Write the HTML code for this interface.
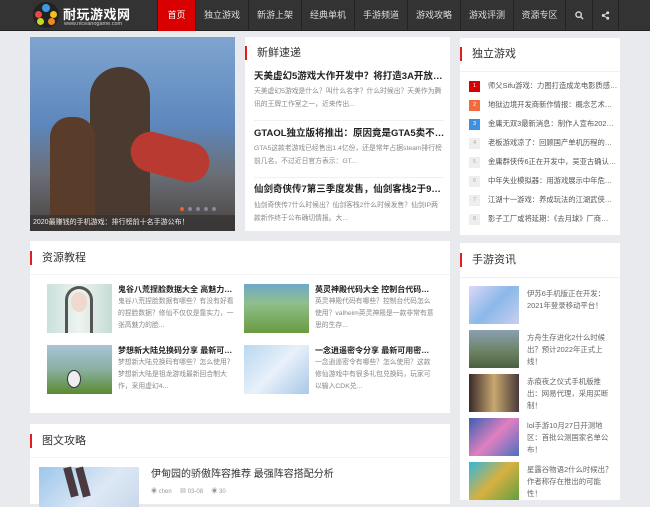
<!DOCTYPE html>
<html><head><meta charset="utf-8"><style>
*{margin:0;padding:0;box-sizing:border-box}
body{width:650px;height:500px;overflow:hidden;background:#e9eaed;font-family:"Liberation Sans","Noto Sans CJK SC",sans-serif;position:relative}
.a{position:absolute}
.hd{left:0;top:0;width:650px;height:31px;background:#333;border-bottom:1px solid #222}
.nav{top:0;height:31px;color:#ddd;font-size:9px;line-height:31px;text-align:center;border-left:1px solid #222}
.box{background:#fff}
.tt{font-size:11px;color:#333;padding-left:10px;border-left:2px solid #e02020;line-height:14px}
.h{font-size:9.5px;font-weight:bold;color:#222;white-space:nowrap;overflow:hidden;text-overflow:ellipsis}
.p{font-size:6.8px;color:#888;line-height:13px}
.rk{font-size:7.3px;color:#555;white-space:nowrap;height:19px;line-height:19px;overflow:hidden}
.n{display:inline-block;width:11px;height:11px;line-height:11px;text-align:center;font-size:5.5px;background:#eee;margin-right:8px;vertical-align:middle;color:#aaa}
.g{font-size:7.4px;color:#666;line-height:12px}
</style></head><body>
<div class="a hd"></div>
<div class="a" style="left:33px;top:2px;width:26px;height:26px;border-radius:50%;background:#222">
<div class="a" style="left:9px;top:2px;width:8px;height:8px;border-radius:50%;background:#3a9be0"></div>
<div class="a" style="left:2px;top:9px;width:7px;height:7px;border-radius:50%;background:#e84848"></div>
<div class="a" style="left:17px;top:9px;width:7px;height:7px;border-radius:50%;background:#f0c020"></div>
<div class="a" style="left:4px;top:16px;width:7px;height:7px;border-radius:50%;background:#c8d820"></div>
<div class="a" style="left:15px;top:16px;width:7px;height:7px;border-radius:50%;background:#f08a20"></div>
</div>
<div class="a" style="left:63px;top:4px;color:#fff;font-size:13px;font-weight:bold;letter-spacing:0.5px">耐玩游戏网</div>
<div class="a" style="left:64px;top:21px;color:#ccc;font-size:5.5px">www.niceanogame.com</div>
<div class="a nav" style="left:157px;width:38px;background:#d80000;color:#fff">首页</div>
<div class="a nav" style="left:195px;width:53px">独立游戏</div>
<div class="a nav" style="left:248px;width:53px">新游上架</div>
<div class="a nav" style="left:301px;width:53px">经典单机</div>
<div class="a nav" style="left:354px;width:53px">手游频道</div>
<div class="a nav" style="left:407px;width:53px">游戏攻略</div>
<div class="a nav" style="left:460px;width:53px">游戏评测</div>
<div class="a nav" style="left:513px;width:52px">资源专区</div>
<div class="a nav" style="left:565px;width:27px"><svg width="9" height="9" viewBox="0 0 10 10" style="vertical-align:middle"><circle cx="4" cy="4" r="3" fill="none" stroke="#ddd" stroke-width="1.5"/><path d="M6.2 6.2L9 9" stroke="#ddd" stroke-width="1.5"/></svg></div>
<div class="a nav" style="left:592px;width:27px;border-right:1px solid #222"><svg width="9" height="9" viewBox="0 0 10 10" style="vertical-align:middle"><circle cx="7.5" cy="2" r="1.6" fill="#ddd"/><circle cx="2.5" cy="5" r="1.6" fill="#ddd"/><circle cx="7.5" cy="8" r="1.6" fill="#ddd"/><path d="M7.5 2L2.5 5L7.5 8" stroke="#ddd" fill="none"/></svg></div>

<div class="a" style="left:30px;top:37px;width:205px;height:194px;background:linear-gradient(180deg,#7fa4cf 0%,#5d87bd 45%,#6b6f78 70%,#4a4240 100%)">
<div class="a" style="left:60px;top:30px;width:60px;height:160px;background:#4a3a30;border-radius:30px 30px 0 0"></div>
<div class="a" style="left:20px;top:80px;width:45px;height:110px;background:#5a3c2a;border-radius:20px 20px 0 0"></div>
<div class="a" style="left:100px;top:100px;width:80px;height:40px;background:#b83a30;border-radius:20px;transform:rotate(15deg)"></div>
<div class="a" style="left:150px;top:170px;width:4px;height:4px;border-radius:50%;background:#e8632d"></div>
<div class="a" style="left:158px;top:170px;width:4px;height:4px;border-radius:50%;background:#889"></div>
<div class="a" style="left:166px;top:170px;width:4px;height:4px;border-radius:50%;background:#889"></div>
<div class="a" style="left:174px;top:170px;width:4px;height:4px;border-radius:50%;background:#889"></div>
<div class="a" style="left:182px;top:170px;width:4px;height:4px;border-radius:50%;background:#889"></div>
<div class="a" style="left:0;top:178px;width:205px;height:16px;background:rgba(50,50,50,.7);color:#eee;font-size:7px;line-height:16px;padding-left:3px">2020最赚钱的手机游戏：排行榜前十名手游公布！</div>
</div>

<div class="a box" style="left:245px;top:37px;width:205px;height:194px">
<div class="a tt" style="left:0;top:9px">新鲜速递</div>
<div class="a h" style="left:9px;top:31px;width:192px">天美虚幻5游戏大作开发中？将打造3A开放世界</div>
<div class="a p" style="left:9px;top:48px;width:190px">天美虚幻5游戏是什么？叫什么名字？什么时候出？天美作为腾讯的王牌工作室之一，近来传出...</div>
<div class="a" style="left:9px;top:83px;width:190px;border-top:1px solid #f0f0f0"></div>
<div class="a h" style="left:9px;top:88px;width:192px">GTAOL独立版将推出：原因竟是GTA5卖不动…</div>
<div class="a p" style="left:9px;top:105px;width:190px">GTA5这款老游戏已经售出1.4亿份，还是常年占据steam排行榜前几名，不过近日官方表示：GT...</div>
<div class="a" style="left:9px;top:140px;width:190px;border-top:1px solid #f0f0f0"></div>
<div class="a h" style="left:9px;top:144px;width:192px">仙剑奇侠传7第三季度发售，仙剑客栈2于9月推</div>
<div class="a p" style="left:9px;top:162px;width:190px">仙剑奇侠传7什么时候出？仙剑客栈2什么时候发售？仙剑IP两款新作终于公布确切情报。大...</div>
</div>

<div class="a box" style="left:460px;top:38px;width:160px;height:197px">
<div class="a tt" style="left:0;top:9px">独立游戏</div>
<div class="a" style="left:0;top:33px;width:160px;border-top:1px solid #f0f0f0"></div>
<div class="a" style="left:9px;top:38px;width:148px">
<div class="rk"><span class="n" style="background:#d80000;color:#fff">1</span>师父Sifu游戏：力图打造成龙电影质感…</div>
<div class="rk"><span class="n" style="background:#f56a3c;color:#fff">2</span>地狱边境开发商新作情报：概念艺术…</div>
<div class="rk"><span class="n" style="background:#3d8fe0;color:#fff">3</span>金庸无双3最新消息：制作人宣布202…</div>
<div class="rk"><span class="n">4</span>老板游戏凉了：回顾国产单机历程的…</div>
<div class="rk"><span class="n">5</span>金庸群侠传6正在开发中，吴亚古确认…</div>
<div class="rk"><span class="n">6</span>中年失业模拟器：用游戏展示中年危…</div>
<div class="rk"><span class="n">7</span>江湖十一游戏：养成玩法的江湖武侠…</div>
<div class="rk"><span class="n">8</span>影子工厂或将延期：《去月球》厂商…</div>
</div></div>

<div class="a box" style="left:30px;top:241px;width:420px;height:172px">
<div class="a tt" style="left:0;top:10px">资源教程</div>
<div class="a" style="left:0;top:33px;width:420px;border-top:1px solid #f3f3f3"></div>
<div class="a" style="left:17px;top:43px;width:65px;height:49px;background:linear-gradient(90deg,#c9e0dc,#eef4ef 50%,#c5dcd6)"><div class="a" style="left:24px;top:8px;width:16px;height:20px;border-radius:50%;background:#f0d8cc"></div><div class="a" style="left:18px;top:2px;width:28px;height:47px;border-radius:14px 14px 0 0;border:3px solid #555;border-bottom:none"></div></div>
<div class="a h" style="left:88px;top:43px;width:122px;font-size:8px">鬼谷八荒捏脸数据大全 高魅力好…</div>
<div class="a p" style="left:88px;top:55px;width:122px;line-height:12px">鬼谷八荒捏脸数据有哪些？有没有好看的捏脸数据？修仙不仅仅是靠实力，一张高魅力的脸...</div>
<div class="a" style="left:214px;top:43px;width:65px;height:49px;background:linear-gradient(180deg,#6fa9c8 0%,#8fbf8a 40%,#6a9a40 100%)"></div>
<div class="a h" style="left:285px;top:43px;width:122px;font-size:8px">英灵神殿代码大全 控制台代码指…</div>
<div class="a p" style="left:285px;top:55px;width:122px;line-height:12px">英灵神殿代码有哪些？控制台代码怎么使用？valheim英灵神殿是一款非常有意思的生存...</div>
<div class="a" style="left:17px;top:104px;width:65px;height:49px;background:linear-gradient(180deg,#a9c4d9 0%,#8ab0a0 50%,#5a8a30 100%)"><div class="a" style="left:20px;top:25px;width:14px;height:18px;border-radius:50%;background:#eee;border:1px solid #334"></div></div>
<div class="a h" style="left:88px;top:104px;width:122px;font-size:8px">梦想新大陆兑换码分享 最新可用…</div>
<div class="a p" style="left:88px;top:116px;width:122px;line-height:12px">梦想新大陆兑换码有哪些？怎么使用？梦想新大陆是祖龙游戏最新回合制大作，采用虚幻4...</div>
<div class="a" style="left:214px;top:104px;width:65px;height:49px;background:linear-gradient(135deg,#b8d8f0,#e8f0fa 50%,#a8c8e8)"></div>
<div class="a h" style="left:285px;top:104px;width:122px;font-size:8px">一念逍遥密令分享 最新可用密令…</div>
<div class="a p" style="left:285px;top:116px;width:122px;line-height:12px">一念逍遥密令有哪些？怎么使用？这款修仙游戏中有很多礼包兑换码，玩家可以输入CDK兑...</div>
</div>

<div class="a box" style="left:30px;top:424px;width:420px;height:80px">
<div class="a tt" style="left:0;top:10px">图文攻略</div>
<div class="a" style="left:0;top:33px;width:420px;border-top:1px solid #f3f3f3"></div>
<div class="a" style="left:9px;top:43px;width:100px;height:40px;background:linear-gradient(135deg,#9cc6ec,#dde8f4 60%,#c8d8ea)"><div class="a" style="left:28px;top:0;width:8px;height:30px;background:#4a3a40;transform:rotate(-15deg)"></div><div class="a" style="left:40px;top:0;width:8px;height:30px;background:#4a3a40;transform:rotate(-15deg)"></div></div>
<div class="a" style="left:121px;top:41px;font-size:10px;color:#333">伊甸园的骄傲阵容推荐 最强阵容搭配分析</div>
<div class="a" style="left:121px;top:62px;font-size:6px;color:#999">◉ chen &nbsp;&nbsp;&nbsp; ▦ 03-08 &nbsp;&nbsp;&nbsp; ◉ 30</div>
</div>

<div class="a box" style="left:460px;top:243px;width:160px;height:257px">
<div class="a tt" style="left:0;top:10px">手游资讯</div>
<div class="a" style="left:0;top:34px;width:160px;border-top:1px solid #f0f0f0"></div>
<div class="a" style="left:9px;top:43px;width:50px;height:38px;background:linear-gradient(135deg,#dcd8f8,#8ab8e8 50%,#c8d0f0)"></div>
<div class="a g" style="left:67px;top:45px;width:88px">伊苏6手机版正在开发：2021年登录移动平台！</div>
<div class="a" style="left:9px;top:87px;width:50px;height:38px;background:linear-gradient(180deg,#8aa0b0,#6a8060 60%,#4a6040)"></div>
<div class="a g" style="left:67px;top:89px;width:82px">方舟生存进化2什么时候出？预计2022年正式上线！</div>
<div class="a" style="left:9px;top:131px;width:50px;height:38px;background:linear-gradient(90deg,#3a2a2a,#c8a870 50%,#4a3a3a)"></div>
<div class="a g" style="left:67px;top:133px;width:88px">赤痕夜之仪式手机版推出：网易代理，采用买断制！</div>
<div class="a" style="left:9px;top:175px;width:50px;height:38px;background:linear-gradient(135deg,#3a60b0,#e080c0 50%,#4a70c0)"></div>
<div class="a g" style="left:67px;top:177px;width:82px">lol手游10月27日开测地区：首批公测国家名单公布！</div>
<div class="a" style="left:9px;top:219px;width:50px;height:38px;background:linear-gradient(135deg,#30b8e0,#d8b040 50%,#60a040)"></div>
<div class="a g" style="left:67px;top:221px;width:88px">星露谷物语2什么时候出？作者称存在推出的可能性！</div>
</div>
</body></html>
